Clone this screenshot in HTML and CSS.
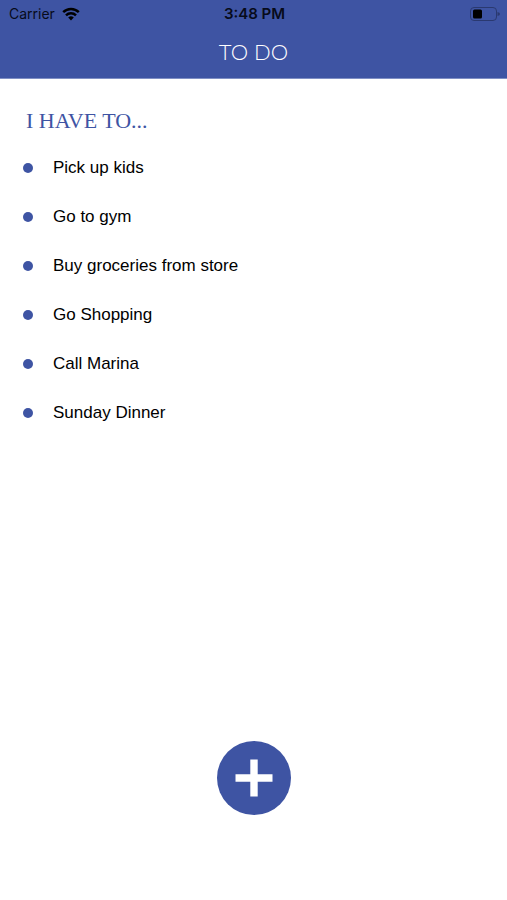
FILE: index.html
```html
<!DOCTYPE html>
<html lang="en">
<head>
<meta charset="utf-8">
<meta name="viewport" content="width=device-width, initial-scale=1">
<title>To Do</title>
<link rel="stylesheet" href="styles.css">
</head>
<body>
<header class="header">
  <div class="status">
    <div class="carrier">
      <span>Carrier</span>
      <svg class="wifi" viewBox="0 0 18 14" aria-hidden="true"><path class="arc" d="M1.200 5.200A11.200 11.200 0 0 1 16.800 5.200M4 8.300A7.200 7.200 0 0 1 14 8.300"/><path d="M6.200 10.500A4 4 0 0 1 11.800 10.500L9 13.500Z"/></svg>
    </div>
    <time class="clock">3:48 PM</time>
    <svg class="battery" viewBox="0 0 30 14" aria-hidden="true"><rect class="shell" x="0.5" y="0.5" width="26" height="13" rx="3.500"/><rect x="3" y="2.500" width="9" height="9" rx="1.500"/><path class="cap" d="M27.500 5Q30 5.500 30 7T27.500 9Z"/></svg>
  </div>
  <h1 class="title">TO DO</h1>
</header>
<main class="content">
  <h2 class="heading">I HAVE TO...</h2>
  <ul class="tasks">
    <li class="task">Pick up kids</li>
    <li class="task">Go to gym</li>
    <li class="task">Buy groceries from store</li>
    <li class="task">Go Shopping</li>
    <li class="task">Call Marina</li>
    <li class="task">Sunday Dinner</li>
  </ul>
</main>
<footer class="footer">
  <button class="add" type="button" aria-label="Add task">
    <svg class="plus" viewBox="0 0 38 38" aria-hidden="true"><path d="M15.300 0.500h7.400v14.800h14.800v7.400H22.700v14.800h-7.400V22.700H0.500v-7.400h14.800z"/></svg>
  </button>
</footer>
</body>
</html>
```
FILE: styles.css
```css
* {
  box-sizing: border-box;
}

body {
  margin: 0;
  min-height: 100vh;
  display: flex;
  flex-direction: column;
  background: #fff;
  color: #000;
  font-family: "Liberation Sans", Arial, sans-serif;
}

.header {
  height: 79px;
  border-bottom: 1px solid #7f8fc4;
  background: #3e54a3;
}

.status {
  height: 27px;
  padding: 0 7px 0 9px;
  display: grid;
  grid-template-columns: 1fr auto 1fr;
  align-items: center;
  color: #070b1a;
  font-family: Inter, sans-serif;
  font-size: 14px;
}

.carrier {
  display: flex;
  align-items: center;
  gap: 7px;
}

.wifi {
  width: 18px;
  height: 14px;
}

.arc {
  fill: none;
  stroke: #000;
  stroke-width: 2.5;
}

.clock {
  font-size: 15px;
  font-weight: 600;
}

.battery {
  width: 30px;
  height: 14px;
  justify-self: end;
}

.shell {
  fill: none;
  stroke: #2a3970;
}

.cap {
  fill: #2a3970;
}

.title {
  margin: 0;
  color: #fff;
  font-family: Lato, sans-serif;
  font-size: 22px;
  font-weight: 300;
  line-height: 50px;
  text-align: center;
}

.content {
  flex: 1;
  padding: 24px 26px;
}

.heading {
  margin: 0;
  color: #3e54a3;
  font-family: "Liberation Serif", "Times New Roman", serif;
  font-size: 22px;
  font-weight: 400;
  line-height: 36px;
}

.tasks {
  margin: 4px 0 0 -3px;
  padding: 0;
  list-style: none;
}

.task {
  height: 49px;
  display: flex;
  align-items: center;
  gap: 20px;
  font-size: 17px;
}

.task::before {
  content: "";
  width: 10px;
  height: 10px;
  border-radius: 50%;
  background: #3e54a3;
}

.footer {
  padding-bottom: 85px;
  display: flex;
  justify-content: center;
}

.add {
  width: 74px;
  height: 74px;
  padding: 0;
  border: 0;
  border-radius: 50%;
  display: grid;
  place-items: center;
  background: #3e54a3;
}

.plus {
  width: 38px;
  height: 38px;
  fill: #fff;
}
```
